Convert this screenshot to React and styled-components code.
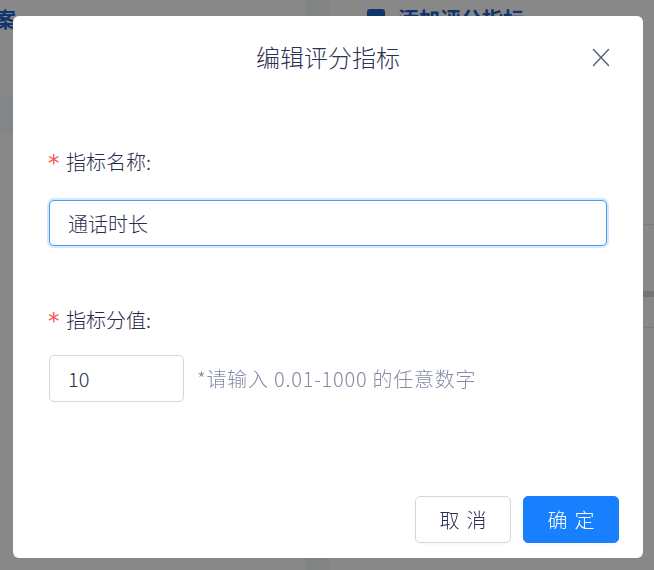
import React from 'react';
import styled, { createGlobalStyle } from 'styled-components';

const GlobalStyle = createGlobalStyle`
  html, body {
    margin: 0;
    padding: 0;
  }
  body {
    font-family: "Noto Sans CJK SC", "Noto Sans", sans-serif;
    background: #f0f2f5;
    overflow: hidden;
  }
  * {
    box-sizing: border-box;
  }
`;

const Page = styled.div`
  display: flex;
  gap: 25px;
  height: 100vh;
`;

const LeftPanel = styled.aside`
  width: 305px;
  background: #fbfbfc;
  padding-top: 5px;
  overflow: hidden;
`;

const PanelTitle = styled.h2`
  margin: 0 0 0 ${p => p.$shift || 0}px;
  display: flex;
  align-items: center;
  gap: 13px;
  font-size: 21px;
  line-height: 26px;
  font-weight: 700;
  color: #1d62c9;
  white-space: nowrap;
`;

const ListRow = styled.div`
  margin-top: 64px;
  height: 38px;
  background: ${p => (p.$active ? '#f3f7fe' : 'transparent')};
`;

const RightPanel = styled.main`
  flex: 1;
  background: #fbfbfc;
  padding: 5px 0 0 37px;
  display: flex;
  flex-direction: column;
`;

const TitleIcon = styled.span`
  width: 18px;
  height: 18px;
  border-radius: 3px;
  background: #1d62c9;
  flex: none;
`;

const Divider = styled.div`
  margin-top: ${p => p.$top}px;
  height: ${p => p.$h || 1}px;
  background: ${p => p.$color || '#e4e6eb'};
  margin-left: -37px;
`;

const Overlay = styled.div`
  position: fixed;
  inset: 0;
  background: rgba(0, 0, 0, 0.46);
  display: flex;
  justify-content: center;
  align-items: flex-start;
  padding: 16px 0 0 2px;
`;

const Modal = styled.div`
  width: 630px;
  height: 542px;
  background: #fff;
  border-radius: 6px;
  display: flex;
  flex-direction: column;
  padding: 0 36px;
  font-weight: 300;
`;

const Header = styled.div`
  display: grid;
  grid-template-columns: 1fr auto 1fr;
  align-items: center;
  padding-top: 28px;
`;

const Title = styled.h3`
  grid-column: 2;
  margin: 0;
  font-size: 24px;
  line-height: 26px;
  font-weight: 300;
  color: #2b3152;
`;

const CloseButton = styled.button`
  justify-self: end;
  margin-right: -4px;
  width: 20px;
  height: 20px;
  padding: 0;
  border: none;
  background: none;
  display: flex;
  align-items: center;
  justify-content: center;
  cursor: pointer;
`;

const Field = styled.div`
  margin-top: ${p => p.$top}px;
`;

const Label = styled.label`
  display: flex;
  align-items: center;
  font-size: 20px;
  line-height: 24px;
  color: #252a48;
  margin-bottom: ${p => p.$gap}px;
`;

const Required = styled.span`
  color: #f5564f;
  font-size: 23px;
  width: 17px;
  flex: none;
  font-family: "DejaVu Sans", sans-serif;
  font-weight: 400;
  position: relative;
  top: 1px;
  left: -1px;
`;

const Row = styled.div`
  display: flex;
  align-items: center;
  gap: 13px;
`;

const TextInput = styled.input`
  width: ${p => p.$width || '100%'};
  height: ${p => p.$height || 46}px;
  padding: 0 18px;
  font-family: inherit;
  font-weight: 300;
  font-size: 20px;
  color: #2a2f50;
  background: #fff;
  border-radius: 5px;
  outline: none;
  border: 1px solid ${p => (p.$focused ? '#4c9df8' : '#d3d6e2')};
  box-shadow: ${p => (p.$focused ? '0 0 0 2px #d3e7fd' : 'none')};
`;

const Hint = styled.span`
  font-size: 20px;
  letter-spacing: 0.75px;
  color: #878ca6;
  white-space: nowrap;
`;

const Footer = styled.div`
  margin-top: auto;
  margin-right: -12px;
  padding-bottom: 15px;
  display: flex;
  justify-content: flex-end;
  gap: 12px;
`;

const Button = styled.button`
  width: 96px;
  height: 47px;
  border-radius: 5px;
  font-family: inherit;
  font-weight: 300;
  font-size: 20px;
  letter-spacing: 0.34em;
  text-indent: 0.34em;
  cursor: pointer;
  border: 1px solid ${p => (p.$primary ? '#1880ff' : '#d3d6e2')};
  background: ${p => (p.$primary ? '#1880ff' : '#fff')};
  color: ${p => (p.$primary ? '#fff' : '#2a2f50')};
  box-shadow: 0 2px 0 rgba(0, 0, 0, 0.02);
`;

function CloseIcon() {
  return (
    <svg width="18" height="19" viewBox="0 0 18 19" fill="none">
      <path d="M1.5 1.5L16.5 17.5M16.5 1.5L1.5 17.5" stroke="#5d6282" strokeWidth="1.5" strokeLinecap="round" />
    </svg>
  );
}

export default function App() {
  return (
    <>
      <GlobalStyle />
      <Page>
        <LeftPanel>
          <PanelTitle $shift={-68}>评分方案</PanelTitle>
          <ListRow $active />
        </LeftPanel>
        <RightPanel>
          <PanelTitle>
            <TitleIcon />
            添加评分指标
          </PanelTitle>
          <Divider $top={193} />
          <Divider $top={66} $h={6} $color="#d7d9de" />
          <Divider $top={30} />
        </RightPanel>
      </Page>

      <Overlay>
        <Modal>
          <Header>
            <Title>编辑评分指标</Title>
            <CloseButton aria-label="关闭">
              <CloseIcon />
            </CloseButton>
          </Header>

          <Field $top={80}>
            <Label $gap={26}>
              <Required>*</Required>
              指标名称:
            </Label>
            <TextInput $focused defaultValue="通话时长" />
          </Field>

          <Field $top={62}>
            <Label $gap={23}>
              <Required>*</Required>
              指标分值:
            </Label>
            <Row>
              <TextInput $width="135px" $height={47} defaultValue="10" />
              <Hint>*请输入 0.01-1000 的任意数字</Hint>
            </Row>
          </Field>

          <Footer>
            <Button>取消</Button>
            <Button $primary>确定</Button>
          </Footer>
        </Modal>
      </Overlay>
    </>
  );
}
